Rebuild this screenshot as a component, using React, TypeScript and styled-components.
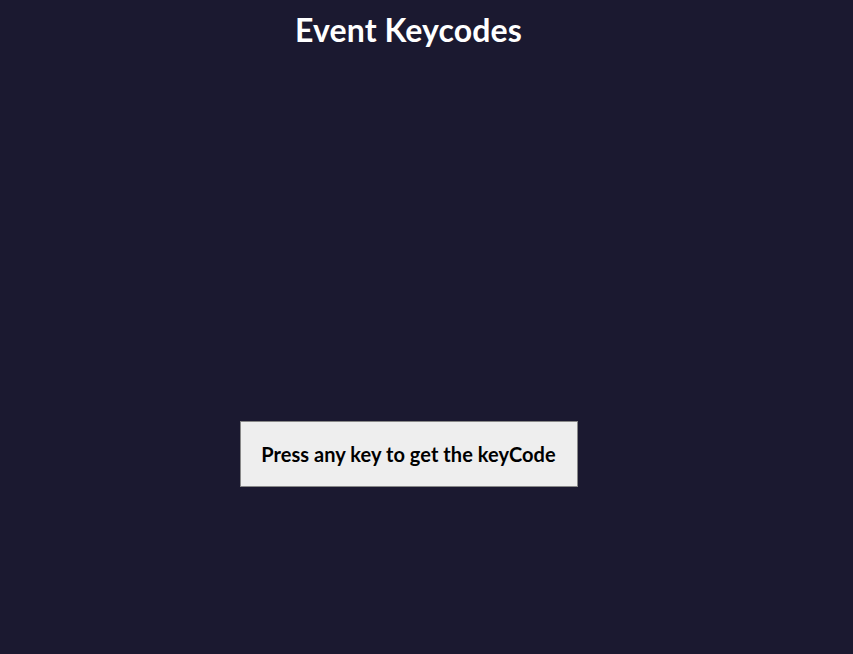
import React from "react";
import styled, { createGlobalStyle } from "styled-components";

const Global = createGlobalStyle`
  html, body { margin: 0; padding: 0; background: #1b1930; }
  body { font-family: "Lato", "Open Sans", sans-serif; }
`;

const Page = styled.div`
  display: flex;
  flex-direction: column;
  align-items: center;
  width: 817px;
  height: 654px;
  box-sizing: border-box;
`;

const Title = styled.h1`
  margin: 12px 0 0;
  color: #ffffff;
  font-size: 32px;
  font-weight: 700;
  letter-spacing: 0.1px;
  line-height: 36px;
`;

const KeyBox = styled.div`
  margin-top: 373px;
  width: 338px;
  height: 66px;
  box-sizing: border-box;
  background: #eeeeee;
  border: 1px solid #888888;
  display: flex;
  align-items: center;
  justify-content: center;
  color: #000000;
  font-size: 20px;
  font-weight: 700;
  letter-spacing: 0.05px;
`;

export default function App() {
  return (
    <>
      <Global />
      <Page>
        <Title>Event Keycodes</Title>
        <KeyBox>Press any key to get the keyCode</KeyBox>
      </Page>
    </>
  );
}
